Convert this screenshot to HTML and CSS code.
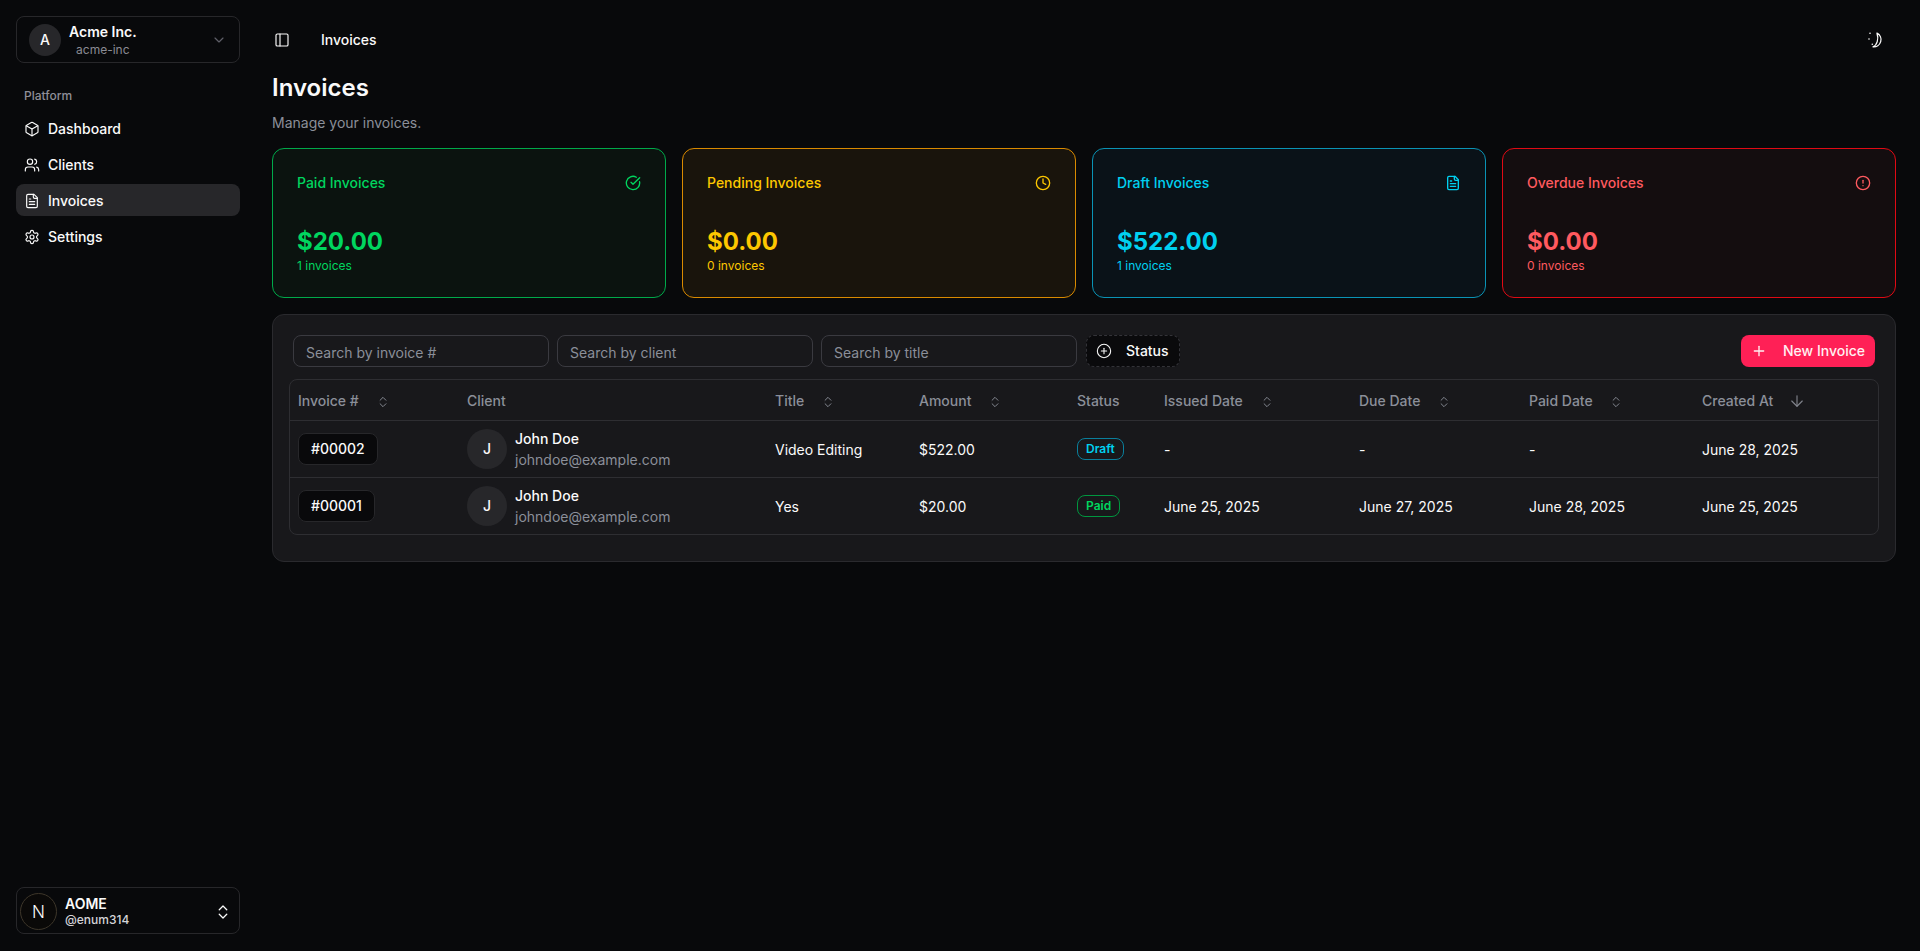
FILE: index.html
```html
<!DOCTYPE html>
<html lang="en">
<head>
  <meta charset="UTF-8" />
  <meta name="viewport" content="width=device-width, initial-scale=1.0"/>
  <title>Invoices</title>
  <link rel="stylesheet" href="styles.css">
</head>
<body>

  <aside class="sidebar">
    <button class="team-switcher">
      <span class="team-avatar">A</span>
      <span class="team-info">
        <span class="team-name">Acme Inc.</span>
        <span class="team-slug">acme-inc</span>
      </span>
      <svg class="icon team-chevron" viewBox="0 0 24 24"><path d="m6 9 6 6 6-6"/></svg>
    </button>

    <p class="nav-label">Platform</p>
    <nav class="nav-list">
      <a href="#" class="nav-item">
        <svg class="icon" viewBox="0 0 24 24"><path d="M21 8a2 2 0 0 0-1-1.73l-7-4a2 2 0 0 0-2 0l-7 4A2 2 0 0 0 3 8v8a2 2 0 0 0 1 1.73l7 4a2 2 0 0 0 2 0l7-4A2 2 0 0 0 21 16Z"/><path d="m3.3 7 8.7 5 8.7-5"/><path d="M12 22V12"/></svg>
        Dashboard
      </a>
      <a href="#" class="nav-item">
        <svg class="icon" viewBox="0 0 24 24"><path d="M16 21v-2a4 4 0 0 0-4-4H6a4 4 0 0 0-4 4v2"/><circle cx="9" cy="7" r="4"/><path d="M22 21v-2a4 4 0 0 0-3-3.87"/><path d="M16 3.13a4 4 0 0 1 0 7.75"/></svg>
        Clients
      </a>
      <a href="#" class="nav-item active">
        <svg class="icon" viewBox="0 0 24 24"><path d="M15 2H6a2 2 0 0 0-2 2v16a2 2 0 0 0 2 2h12a2 2 0 0 0 2-2V7Z"/><path d="M14 2v4a2 2 0 0 0 2 2h4"/><path d="M10 9H8"/><path d="M16 13H8"/><path d="M16 17H8"/></svg>
        Invoices
      </a>
      <a href="#" class="nav-item">
        <svg class="icon" viewBox="0 0 24 24"><path d="M12.22 2h-.44a2 2 0 0 0-2 2v.18a2 2 0 0 1-1 1.73l-.43.25a2 2 0 0 1-2 0l-.15-.08a2 2 0 0 0-2.73.73l-.22.38a2 2 0 0 0 .73 2.73l.15.1a2 2 0 0 1 1 1.72v.51a2 2 0 0 1-1 1.74l-.15.09a2 2 0 0 0-.73 2.73l.22.38a2 2 0 0 0 2.73.73l.15-.08a2 2 0 0 1 2 0l.43.25a2 2 0 0 1 1 1.73V20a2 2 0 0 0 2 2h.44a2 2 0 0 0 2-2v-.18a2 2 0 0 1 1-1.73l.43-.25a2 2 0 0 1 2 0l.15.08a2 2 0 0 0 2.73-.73l.22-.39a2 2 0 0 0-.73-2.73l-.15-.08a2 2 0 0 1-1-1.74v-.5a2 2 0 0 1 1-1.74l.15-.09a2 2 0 0 0 .73-2.73l-.22-.38a2 2 0 0 0-2.73-.73l-.15.08a2 2 0 0 1-2 0l-.43-.25a2 2 0 0 1-1-1.73V4a2 2 0 0 0-2-2z"/><circle cx="12" cy="12" r="3"/></svg>
        Settings
      </a>
    </nav>

    <button class="user-switcher">
      <span class="user-avatar">N</span>
      <span class="user-info">
        <span class="user-name">AOME</span>
        <span class="user-handle">@enum314</span>
      </span>
      <svg class="icon user-chevrons" viewBox="0 0 24 24"><path d="m7 15 5 5 5-5"/><path d="m7 9 5-5 5 5"/></svg>
    </button>
  </aside>

  <main class="content">
    <header class="topbar">
      <svg class="icon panel-icon" viewBox="0 0 24 24"><rect x="3" y="3" width="18" height="18" rx="2"/><path d="M9 3v18"/></svg>
      <span class="crumb">Invoices</span>
      <svg class="theme-icon" viewBox="0 0 17 16">
        <path class="moon" d="M10 1.2A7.2 7.2 0 0 1 6 14.8C10 13.5 12 7 10 1.2Z"/>
        <circle cx="3" cy="1.3" r="0.8"/>
        <circle cx="2" cy="7" r="0.8"/>
        <circle cx="5.3" cy="12.3" r="0.8"/>
      </svg>
    </header>

    <h1 class="page-title">Invoices</h1>
    <p class="page-sub">Manage your invoices.</p>

    <section class="stats">
      <div class="stat-card paid">
        <div class="stat-head">
          <span>Paid Invoices</span>
          <svg class="icon" viewBox="0 0 24 24"><path d="M21.801 10A10 10 0 1 1 17 3.335"/><path d="m9 11 3 3L22 4"/></svg>
        </div>
        <div class="stat-value">$20.00</div>
        <div class="stat-count">1 invoices</div>
      </div>
      <div class="stat-card pending">
        <div class="stat-head">
          <span>Pending Invoices</span>
          <svg class="icon" viewBox="0 0 24 24"><circle cx="12" cy="12" r="10"/><path d="M12 6v6l4 2"/></svg>
        </div>
        <div class="stat-value">$0.00</div>
        <div class="stat-count">0 invoices</div>
      </div>
      <div class="stat-card draft">
        <div class="stat-head">
          <span>Draft Invoices</span>
          <svg class="icon" viewBox="0 0 24 24"><path d="M15 2H6a2 2 0 0 0-2 2v16a2 2 0 0 0 2 2h12a2 2 0 0 0 2-2V7Z"/><path d="M14 2v4a2 2 0 0 0 2 2h4"/><path d="M10 9H8"/><path d="M16 13H8"/><path d="M16 17H8"/></svg>
        </div>
        <div class="stat-value">$522.00</div>
        <div class="stat-count">1 invoices</div>
      </div>
      <div class="stat-card overdue">
        <div class="stat-head">
          <span>Overdue Invoices</span>
          <svg class="icon" viewBox="0 0 24 24"><circle cx="12" cy="12" r="10"/><path d="M12 8v4"/><path d="M12 16h.01"/></svg>
        </div>
        <div class="stat-value">$0.00</div>
        <div class="stat-count">0 invoices</div>
      </div>
    </section>

    <section class="panel">
      <div class="filters">
        <input type="text" class="search" placeholder="Search by invoice #">
        <input type="text" class="search" placeholder="Search by client">
        <input type="text" class="search" placeholder="Search by title">
        <button class="status-filter">
          <svg class="icon" viewBox="0 0 24 24"><circle cx="12" cy="12" r="10"/><path d="M8 12h8"/><path d="M12 8v8"/></svg>
          Status
        </button>
        <button class="new-invoice">
          <svg class="icon" viewBox="0 0 24 24"><path d="M5 12h14"/><path d="M12 5v14"/></svg>
          New Invoice
        </button>
      </div>

      <div class="table-wrap">
        <table class="invoice-table">
          <colgroup>
            <col class="col-number">
            <col class="col-client">
            <col class="col-title">
            <col class="col-amount">
            <col class="col-status">
            <col class="col-issued">
            <col class="col-due">
            <col class="col-paid">
            <col class="col-created">
          </colgroup>
          <thead>
            <tr>
              <th>Invoice # <svg class="icon sort" viewBox="0 0 24 24"><path d="m7 15 5 5 5-5"/><path d="m7 9 5-5 5 5"/></svg></th>
              <th>Client</th>
              <th>Title <svg class="icon sort" viewBox="0 0 24 24"><path d="m7 15 5 5 5-5"/><path d="m7 9 5-5 5 5"/></svg></th>
              <th>Amount <svg class="icon sort" viewBox="0 0 24 24"><path d="m7 15 5 5 5-5"/><path d="m7 9 5-5 5 5"/></svg></th>
              <th>Status</th>
              <th>Issued Date <svg class="icon sort" viewBox="0 0 24 24"><path d="m7 15 5 5 5-5"/><path d="m7 9 5-5 5 5"/></svg></th>
              <th>Due Date <svg class="icon sort" viewBox="0 0 24 24"><path d="m7 15 5 5 5-5"/><path d="m7 9 5-5 5 5"/></svg></th>
              <th>Paid Date <svg class="icon sort" viewBox="0 0 24 24"><path d="m7 15 5 5 5-5"/><path d="m7 9 5-5 5 5"/></svg></th>
              <th>Created At <svg class="sort-active" viewBox="0 0 24 24"><path d="M12 5v14"/><path d="m19 12-7 7-7-7"/></svg></th>
            </tr>
          </thead>
          <tbody>
            <tr>
              <td><span class="invoice-number">#00002</span></td>
              <td>
                <div class="client">
                  <span class="client-avatar">J</span>
                  <div class="client-info">
                    <span class="client-name">John Doe</span>
                    <span class="client-email">johndoe@example.com</span>
                  </div>
                </div>
              </td>
              <td class="text-cell">Video Editing</td>
              <td class="text-cell">$522.00</td>
              <td><span class="badge badge-draft">Draft</span></td>
              <td class="text-cell">-</td>
              <td class="text-cell">-</td>
              <td class="text-cell">-</td>
              <td class="text-cell">June 28, 2025</td>
            </tr>
            <tr>
              <td><span class="invoice-number">#00001</span></td>
              <td>
                <div class="client">
                  <span class="client-avatar">J</span>
                  <div class="client-info">
                    <span class="client-name">John Doe</span>
                    <span class="client-email">johndoe@example.com</span>
                  </div>
                </div>
              </td>
              <td class="text-cell">Yes</td>
              <td class="text-cell">$20.00</td>
              <td><span class="badge badge-paid">Paid</span></td>
              <td class="text-cell">June 25, 2025</td>
              <td class="text-cell">June 27, 2025</td>
              <td class="text-cell">June 28, 2025</td>
              <td class="text-cell">June 25, 2025</td>
            </tr>
          </tbody>
        </table>
      </div>
    </section>
  </main>

</body>
</html>
```

FILE: styles.css
```css
* {
  box-sizing: border-box;
}

body {
  margin: 0;
  height: 951px;
  display: flex;
  overflow: hidden;
  background-color: #08090b;
  color: #fafafa;
  font-family: Inter, "Noto Sans", sans-serif;
  font-size: 14px;
  line-height: 20px;
}

button {
  font: inherit;
  color: inherit;
  cursor: pointer;
}

.icon {
  width: 16px;
  height: 16px;
  flex-shrink: 0;
  fill: none;
  stroke: currentColor;
  stroke-width: 2;
  stroke-linecap: round;
  stroke-linejoin: round;
}

/* sidebar */
.sidebar {
  width: 256px;
  flex-shrink: 0;
  display: flex;
  flex-direction: column;
  padding: 16px 16px 17px;
}

.team-switcher {
  height: 47px;
  display: flex;
  align-items: center;
  padding: 0 12px;
  background: none;
  border: 1px solid #27272a;
  border-radius: 8px;
  text-align: center;
}

.team-avatar {
  width: 32px;
  height: 32px;
  border-radius: 50%;
  background-color: #27272a;
  display: flex;
  align-items: center;
  justify-content: center;
  font-weight: 500;
}

.team-info {
  display: flex;
  flex-direction: column;
  margin: 2px 0 0 8px;
}

.team-name {
  font-weight: 600;
  line-height: 17px;
  margin-bottom: 2px;
}

.team-slug {
  font-size: 12px;
  line-height: 16px;
  color: #8b8b94;
}

.team-chevron {
  margin-left: auto;
  color: #5f5f68;
  stroke-width: 1.75;
}

.nav-label {
  margin: 25px 0 8px;
  padding-left: 8px;
  font-size: 12px;
  line-height: 16px;
  font-weight: 500;
  color: #8f8f98;
}

.nav-list {
  display: flex;
  flex-direction: column;
  gap: 4px;
}

.nav-item {
  height: 32px;
  display: flex;
  align-items: center;
  gap: 8px;
  padding: 1px 8px 0;
  border-radius: 8px;
  color: #fafafa;
  font-weight: 500;
  text-decoration: none;
}

.nav-item .icon {
  stroke-width: 1.75;
}

.nav-item.active {
  background-color: #27272a;
}

.user-switcher {
  margin-top: auto;
  height: 47px;
  display: flex;
  align-items: center;
  padding: 2px 7px 0 3px;
  background: none;
  border: 1px solid #27272a;
  border-radius: 8px;
  text-align: left;
}

.user-avatar {
  width: 37px;
  height: 37px;
  border-radius: 50%;
  background-color: #0a0908;
  border: 1px solid #3d362a;
  display: flex;
  align-items: center;
  justify-content: center;
  font-size: 17px;
  font-weight: 300;
}

.user-info {
  display: flex;
  flex-direction: column;
  margin-left: 8px;
}

.user-name {
  font-weight: 600;
  line-height: 17px;
}

.user-handle {
  font-size: 12px;
  line-height: 16px;
  font-weight: 500;
  color: #d4d4d8;
}

.user-chevrons {
  width: 18px;
  height: 18px;
  margin-left: auto;
  stroke-width: 1.75;
}

/* main */
.content {
  flex: 1;
  min-width: 0;
  padding: 0 24px 0 16px;
}

.topbar {
  height: 64px;
  margin-top: 8px;
  display: flex;
  align-items: center;
}

.panel-icon {
  margin-left: 2px;
  stroke-width: 1.75;
}

.crumb {
  margin-left: 31px;
  font-weight: 500;
}

.theme-icon {
  width: 17px;
  height: 16px;
  margin-left: auto;
  margin-right: 12px;
  fill: #fafafa;
}

.theme-icon .moon {
  fill: none;
  stroke: #fafafa;
  stroke-width: 1.3;
  stroke-linejoin: round;
}

.page-title {
  margin: 0;
  font-size: 24px;
  line-height: 32px;
  font-weight: 600;
}

.page-sub {
  margin: 9px 0 15px;
  color: #8b8f99;
}

.stats {
  display: grid;
  grid-template-columns: repeat(4, 1fr);
  gap: 16px;
}

.stat-card {
  height: 150px;
  padding: 24px;
  border: 1px solid;
  border-radius: 12px;
}

.stat-head {
  display: flex;
  align-items: center;
  justify-content: space-between;
  font-weight: 500;
}

.stat-value {
  margin-top: 33px;
  font-size: 24px;
  line-height: 32px;
  font-weight: 700;
}

.stat-count {
  font-size: 12px;
  line-height: 16px;
}

.stat-card.paid {
  color: #00d65f;
  background-color: #0b130f;
  border-color: #00a94a;
}

.stat-card.pending {
  color: #fdc700;
  background-color: #19140c;
  border-color: #d98a00;
}

.stat-card.draft {
  color: #00d0f0;
  background-color: #0a1218;
  border-color: #0a93b5;
}

.stat-card.overdue {
  color: #ff5a5f;
  background-color: #140d0f;
  border-color: #e00a14;
}

/* invoices panel */
.panel {
  margin-top: 16px;
  height: 248px;
  padding: 20px;
  background-color: #18181b;
  border: 1px solid #2a2a2e;
  border-radius: 12px;
}

.filters {
  display: flex;
  gap: 8px;
}

.search {
  width: 256px;
  height: 32px;
  padding: 2px 12px 0;
  background: none;
  border: 1px solid #3a3a40;
  border-radius: 8px;
  color: #fafafa;
  font: inherit;
}

.search::placeholder {
  color: #8b8f99;
}

.status-filter {
  width: 94px;
  height: 32px;
  margin-left: 1px;
  display: flex;
  align-items: center;
  gap: 14px;
  padding: 0 9px;
  background-color: #0a0a0c;
  border: 1px dashed #333338;
  border-radius: 8px;
  font-weight: 500;
}

.status-filter .icon {
  stroke-width: 1.6;
}

.new-invoice {
  height: 32px;
  margin-left: auto;
  display: flex;
  align-items: center;
  gap: 16px;
  padding: 0 10px;
  background-color: #ff2056;
  border: none;
  border-radius: 8px;
  color: #fff1f2;
  font-weight: 500;
}

.table-wrap {
  margin: 12px -4px 0;
  border: 1px solid #2e2e32;
  border-radius: 8px;
  overflow: hidden;
}

.invoice-table {
  width: 100%;
  table-layout: fixed;
  border-collapse: separate;
  border-spacing: 0;
}

.col-number { width: 169px; }
.col-client { width: 308px; }
.col-title { width: 144px; }
.col-amount { width: 158px; }
.col-status { width: 87px; }
.col-issued { width: 195px; }
.col-due { width: 170px; }
.col-paid { width: 173px; }
.col-created { width: 184px; }

.invoice-table th,
.invoice-table td {
  padding: 0 8px;
  text-align: left;
  border-bottom: 1px solid #2e2e32;
}

.invoice-table th {
  height: 41px;
  padding-top: 2px;
  color: #8b8f99;
  font-weight: 500;
}

.invoice-table td {
  height: 57px;
}

.invoice-table td.text-cell {
  padding-top: 2px;
}

.invoice-table tbody tr:last-child td {
  height: 56px;
  border-bottom: none;
}

.sort {
  width: 14px;
  height: 14px;
  margin-left: 13px;
  vertical-align: -3px;
  stroke-width: 1.6;
  color: #8b8f99;
}

.sort-active {
  width: 18px;
  height: 18px;
  margin-left: 11px;
  vertical-align: -4px;
  fill: none;
  stroke: #80838c;
  stroke-width: 1.5;
  stroke-linecap: round;
  stroke-linejoin: round;
}

.invoice-number {
  display: inline-flex;
  align-items: center;
  height: 32px;
  padding: 0 12px;
  background-color: #09090b;
  border: 1px solid #27272a;
  border-radius: 8px;
  font-weight: 500;
}

.client {
  display: flex;
  align-items: center;
  gap: 8px;
}

.client-avatar {
  width: 40px;
  height: 40px;
  border-radius: 50%;
  background-color: #27272a;
  display: flex;
  align-items: center;
  justify-content: center;
  font-weight: 500;
}

.client-info {
  display: flex;
  flex-direction: column;
  gap: 1px;
}

.client-name {
  font-weight: 500;
}

.client-email {
  color: #8b8f99;
}

.badge {
  display: inline-flex;
  align-items: center;
  height: 22px;
  padding: 0 8px;
  border: 1px solid;
  border-radius: 8px;
  background-color: transparent;
  font-size: 12px;
  font-weight: 600;
  vertical-align: middle;
}

.badge-draft {
  color: #00d0f0;
  border-color: #0a7f9c;
}

.badge-paid {
  color: #00d65f;
  border-color: #00963f;
}
```
